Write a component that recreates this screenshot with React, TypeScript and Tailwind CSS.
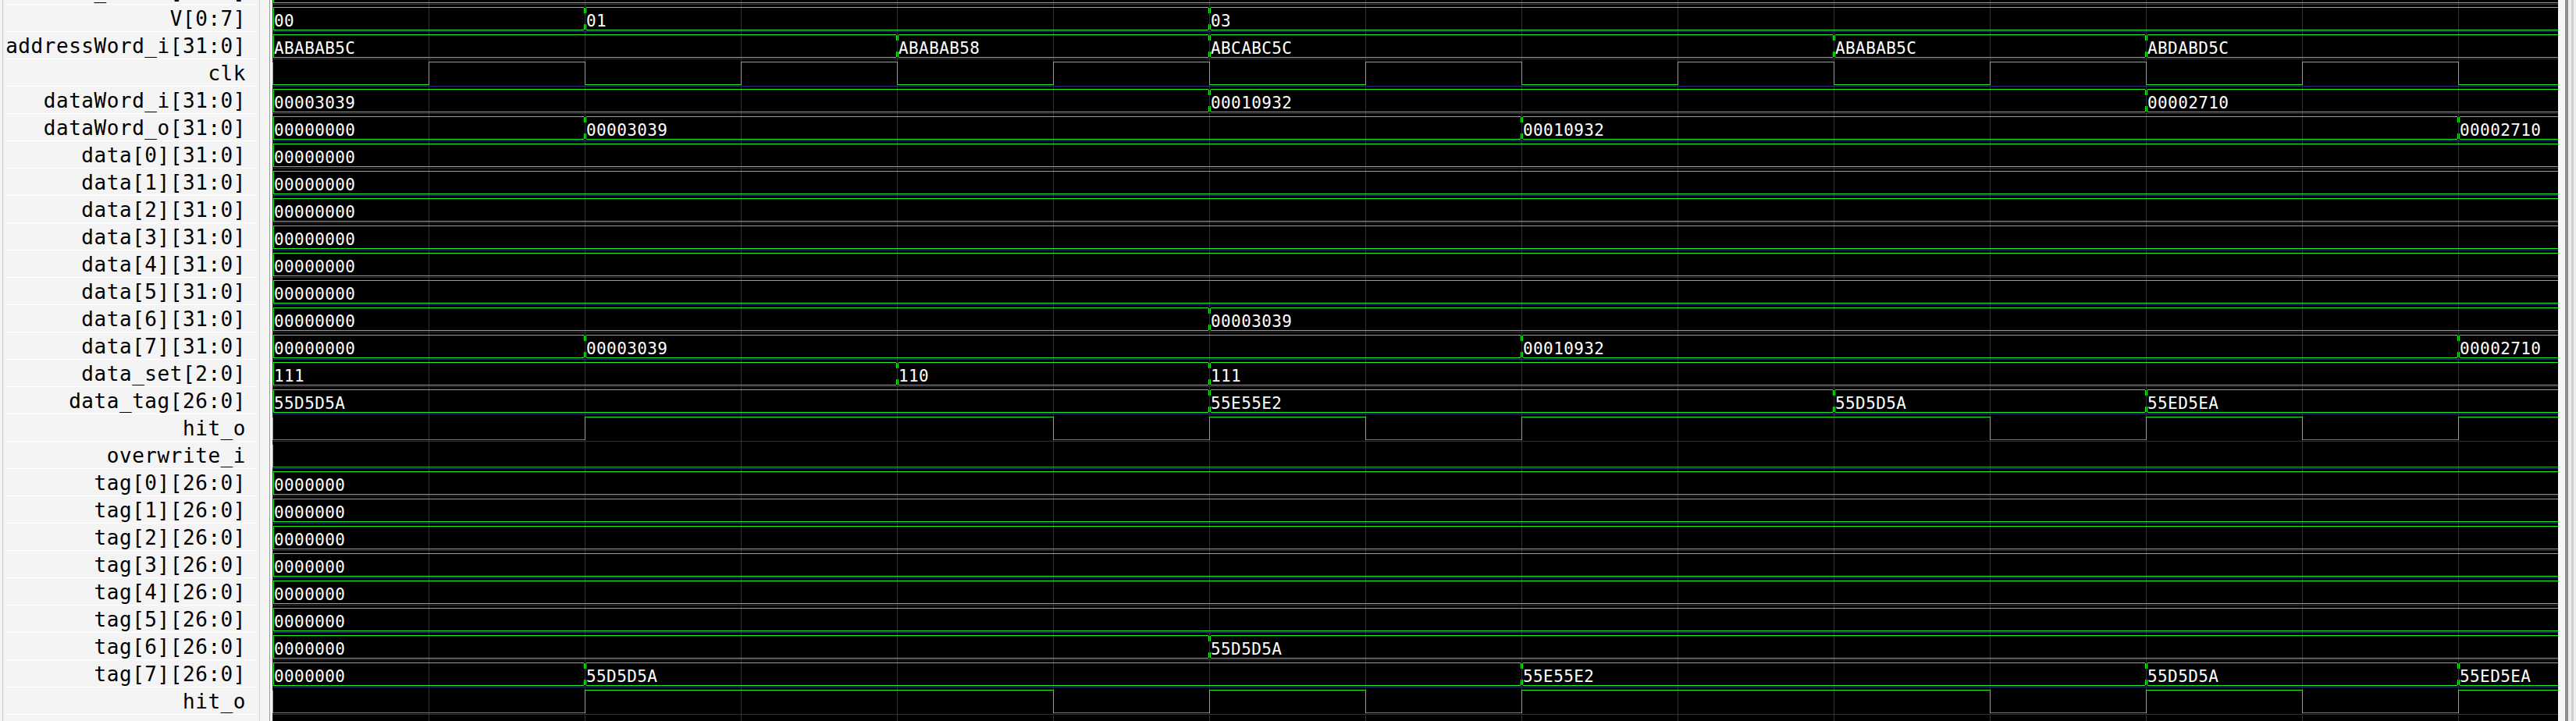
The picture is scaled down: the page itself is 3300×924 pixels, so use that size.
import React from "react";

const W = 2928;
const GREEN = "#1ef21e";
const DIM = "#22b222";
const GRID = "#2a2a74";
const GRID_X = Array.from({ length: 15 }, (_, i) => i * 200);

type Change = [number, string];
type Sig =
  | { kind: "bus"; label: string; changes: Change[] }
  | { kind: "bit"; label: string; changes: Change[]; dimLow?: boolean };

const bus = (label: string, changes: Change[]): Sig => ({ kind: "bus", label, changes });
const bit = (label: string, changes: Change[], dimLow = false): Sig => ({ kind: "bit", label, changes, dimLow });

const clkChanges: Change[] = [[0, "0"]];
for (let i = 1; i <= 14; i++) clkChanges.push([i * 200, i % 2 === 1 ? "1" : "0"]);

const hitChanges: Change[] = [
  [0, "0"],
  [400, "1"],
  [1000, "0"],
  [1200, "1"],
  [1400, "0"],
  [1600, "1"],
  [2200, "0"],
  [2400, "1"],
  [2600, "0"],
  [2800, "1"],
];

const zero32: Change[] = [[0, "00000000"]];
const zero27: Change[] = [[0, "0000000"]];
const dataO: Change[] = [
  [0, "00000000"],
  [400, "00003039"],
  [1600, "00010932"],
  [2800, "00002710"],
];

const SIGNALS: Sig[] = [
  bus("word_index[31:0]", [[0, "00000000"]]),
  bus("V[0:7]", [
    [0, "00"],
    [400, "01"],
    [1200, "03"],
  ]),
  bus("addressWord_i[31:0]", [
    [0, "ABABAB5C"],
    [800, "ABABAB58"],
    [1200, "ABCABC5C"],
    [2000, "ABABAB5C"],
    [2400, "ABDABD5C"],
  ]),
  bit("clk", clkChanges),
  bus("dataWord_i[31:0]", [
    [0, "00003039"],
    [1200, "00010932"],
    [2400, "00002710"],
  ]),
  bus("dataWord_o[31:0]", dataO),
  bus("data[0][31:0]", zero32),
  bus("data[1][31:0]", zero32),
  bus("data[2][31:0]", zero32),
  bus("data[3][31:0]", zero32),
  bus("data[4][31:0]", zero32),
  bus("data[5][31:0]", zero32),
  bus("data[6][31:0]", [
    [0, "00000000"],
    [1200, "00003039"],
  ]),
  bus("data[7][31:0]", dataO),
  bus("data_set[2:0]", [
    [0, "111"],
    [800, "110"],
    [1200, "111"],
  ]),
  bus("data_tag[26:0]", [
    [0, "55D5D5A"],
    [1200, "55E55E2"],
    [2000, "55D5D5A"],
    [2400, "55ED5EA"],
  ]),
  bit("hit_o", hitChanges, true),
  bit("overwrite_i", [[0, "0"]], true),
  bus("tag[0][26:0]", zero27),
  bus("tag[1][26:0]", zero27),
  bus("tag[2][26:0]", zero27),
  bus("tag[3][26:0]", zero27),
  bus("tag[4][26:0]", zero27),
  bus("tag[5][26:0]", zero27),
  bus("tag[6][26:0]", [
    [0, "0000000"],
    [1200, "55D5D5A"],
  ]),
  bus("tag[7][26:0]", [
    [0, "0000000"],
    [400, "55D5D5A"],
    [1600, "55E55E2"],
    [2400, "55D5D5A"],
    [2800, "55ED5EA"],
  ]),
  bit("hit_o", hitChanges, true),
];

function segments(changes: Change[]) {
  return changes.map(([s, v], i) => ({
    s,
    e: i + 1 < changes.length ? changes[i + 1][0] : W,
    v,
  }));
}

function BusWave({ changes }: { changes: Change[] }) {
  const segs = segments(changes);
  let d = "";
  segs.forEach(({ s, e }) => {
    const x0 = s === 0 ? 1 : s + 2;
    const x1 = e === W ? W : e - 1;
    d += `M${x0} 3.5H${x1}M${x0} 32.5H${x1}`;
    if (s === 0) d += "M1.5 3.5V32.5";
    else d += `M${s + 1.5} 4V11M${s + 1.5} 25V32`;
    if (e !== W) d += `M${e - 0.5} 4V11M${e - 0.5} 25V32`;
  });
  return (
    <g>
      <path d={d} stroke={GREEN} fill="none" />
      {segs.map(({ s, v }) => (
        <text key={s} x={s + 2} y={27.5} fill="#ffffff">
          {v}
        </text>
      ))}
    </g>
  );
}

function BitWave({ changes, dimLow }: { changes: Change[]; dimLow?: boolean }) {
  const segs = segments(changes);
  return (
    <g fill="none">
      {segs.map(({ s, e, v }) => (
        <path
          key={`h${s}`}
          d={`M${s} ${v === "1" ? 3.5 : 32.5}H${e === W ? W : e + 1}`}
          stroke={v === "1" ? GREEN : dimLow ? DIM : GREEN}
        />
      ))}
      {segs.map(({ s }) => (
        <path key={`v${s}`} d={`M${s + 0.5} 3.5V32.5`} stroke={GREEN} />
      ))}
    </g>
  );
}

function WaveRow({ sig }: { sig: Sig }) {
  return (
    <svg
      width={W}
      height={35}
      shapeRendering="crispEdges"
      className="block shrink-0 font-['DejaVu_Sans_Mono',monospace] text-[21px] tracking-[0.4px]"
    >
      {GRID_X.map((x) => (
        <path key={x} d={`M${x + 0.5} 0V35`} stroke={GRID} />
      ))}
      <path d={`M0 34.5H${W}`} stroke={GRID} />
      {sig.kind === "bus" ? (
        <BusWave changes={sig.changes} />
      ) : (
        <BitWave changes={sig.changes} dimLow={sig.dimLow} />
      )}
    </svg>
  );
}

function NameRow({ label }: { label: string }) {
  return (
    <div className="ml-[3px] mr-[2px] flex h-[35px] shrink-0 justify-end whitespace-nowrap border-b border-white pr-[15px] text-[26px] leading-[36px] tracking-[0.55px] text-black">
      {label}
    </div>
  );
}

export default function App() {
  return (
    <div className="flex h-[924px] w-[3300px] overflow-hidden bg-[#f4f4f4] font-['DejaVu_Sans_Mono',monospace]">
      <div className="w-[3px] shrink-0" />
      <div className="w-px shrink-0 bg-[#c6c8cc]" />
      <div className="-mt-[29px] flex w-[328px] shrink-0 flex-col">
        {SIGNALS.map((s, i) => (
          <NameRow key={i} label={s.label} />
        ))}
      </div>
      <div className="w-px shrink-0 bg-[#d8d8d8]" />
      <div className="w-[12px] shrink-0" />
      <div className="w-px shrink-0 bg-[#9e9e9e]" />
      <div className="w-[3px] shrink-0" />
      <div className="-mt-[29px] flex w-[2928px] shrink-0 flex-col bg-black">
        {SIGNALS.map((s, i) => (
          <WaveRow key={i} sig={s} />
        ))}
        <svg width={W} height={8} shapeRendering="crispEdges" className="block shrink-0">
          {GRID_X.map((x) => (
            <path key={x} d={`M${x + 0.5} 0V8`} stroke={GRID} />
          ))}
        </svg>
      </div>
      <div className="w-[9px] shrink-0 bg-[#f6f7f9]" />
      <div className="w-[4px] shrink-0 bg-[#8e8e8e]" />
      <div className="w-[4px] shrink-0 bg-[#ececec]" />
      <div className="w-[3px] shrink-0 bg-[#d0d0d0]" />
      <div className="w-[3px] shrink-0 bg-[#f0f0f0]" />
    </div>
  );
}
